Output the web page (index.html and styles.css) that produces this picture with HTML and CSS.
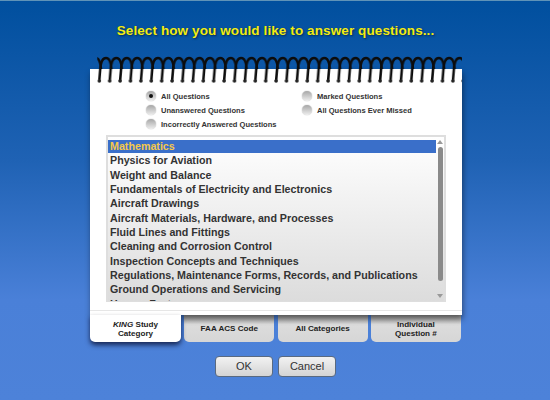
FILE: index.html
```html
<!DOCTYPE html>
<html lang="en">
<head>
    <meta charset="UTF-8">
    <title>Select Questions</title>
    <link rel="stylesheet" href="styles.css">
</head>
<body>
    <h1 class="title">Select how you would like to answer questions...</h1>
    <div class="notebook">
        <svg class="spiral" width="372" height="30" viewBox="0 0 372 30">
            <defs>
                <path id="loop" d="M0 26 L0.9 15 C1.4 7 3.6 3 6.6 3 C9.6 3 11.6 7 12.2 14" fill="none" stroke="#0c0c0c" stroke-width="2.5"/>
                <pattern id="coil" x="7.3" y="0" width="10.4" height="30" patternUnits="userSpaceOnUse">
                    <use href="#loop" x="-8.4"/>
                    <use href="#loop" x="2"/>
                    <circle cx="2" cy="26" r="1.8" fill="#222"/>
                </pattern>
            </defs>
            <rect x="7.3" width="364.7" height="30" fill="url(#coil)"/>
        </svg>
        <div class="card">
            <div class="options">
                <div class="option-col">
                    <label class="option"><span class="radio checked"></span>All Questions</label>
                    <label class="option"><span class="radio"></span>Unanswered Questions</label>
                    <label class="option"><span class="radio"></span>Incorrectly Answered Questions</label>
                </div>
                <div class="option-col">
                    <label class="option"><span class="radio"></span>Marked Questions</label>
                    <label class="option"><span class="radio"></span>All Questions Ever Missed</label>
                </div>
            </div>
            <div class="listbox">
                <ul class="list">
                    <li class="selected">Mathematics</li>
                    <li>Physics for Aviation</li>
                    <li>Weight and Balance</li>
                    <li>Fundamentals of Electricity and Electronics</li>
                    <li>Aircraft Drawings</li>
                    <li>Aircraft Materials, Hardware, and Processes</li>
                    <li>Fluid Lines and Fittings</li>
                    <li>Cleaning and Corrosion Control</li>
                    <li>Inspection Concepts and Techniques</li>
                    <li>Regulations, Maintenance Forms, Records, and Publications</li>
                    <li>Ground Operations and Servicing</li>
                    <li>Human Factors</li>
                </ul>
                <div class="scrollbar">
                    <span class="arrow up"></span>
                    <span class="thumb"></span>
                    <span class="arrow down"></span>
                </div>
            </div>
            <div class="card-rule"></div>
        </div>
        <div class="tabs">
            <div class="tab active"><span><em>KING</em> Study<br>Category</span></div>
            <div class="tab">FAA ACS Code</div>
            <div class="tab">All Categories</div>
            <div class="tab">Individual<br>Question #</div>
        </div>
    </div>
    <div class="buttons">
        <button class="btn">OK</button>
        <button class="btn">Cancel</button>
    </div>
</body>
</html>
```

FILE: styles.css
```css
html, body {
    height: 100%;
}
body {
    margin: 0;
    height: 400px;
    overflow: hidden;
    font-family: "Liberation Sans", Arial, sans-serif;
    background: linear-gradient(to bottom, #004f9e 0%, #1f62b4 40%, #4a80d8 75%, #4d82d9 100%);
    border-top: 1px solid #5f93b8;
    box-sizing: border-box;
}
.title {
    margin: 0;
    padding: 21px 0 0 1px;
    height: 33px;
    line-height: 17px;
    text-align: center;
    font-size: 13.5px;
    font-weight: bold;
    letter-spacing: 0.1px;
    color: #f2ec10;
    text-shadow: 1px 1px 2px rgba(0, 0, 0, 0.5);
}
.notebook {
    width: 372px;
    margin-left: 90px;
}
.spiral {
    display: block;
    position: relative;
    z-index: 2;
    margin-bottom: -16px;
}
.card {
    position: relative;
    z-index: 1;
    height: 246px;
    box-sizing: border-box;
    background: #fff;
    padding: 22px 16px 0;
    box-shadow: 1px 4px 6px rgba(0, 0, 0, 0.45);
}
.card-rule {
    height: 1px;
    margin: 8px -16px 0;
    background: #e6e6e6;
}
.options {
    display: flex;
    padding-left: 40px;
    height: 44px;
}
.option-col {
    flex: none;
    width: 156px;
    display: flex;
    flex-direction: column;
    gap: 4px;
}
.option {
    display: flex;
    align-items: center;
    gap: 5px;
    height: 10px;
    font-size: 7.55px;
    font-weight: bold;
    color: #333;
    white-space: nowrap;
}
.radio {
    width: 10px;
    height: 10px;
    border-radius: 50%;
    flex: none;
    background: linear-gradient(to bottom, #a6a6a6, #eeeeee);
    box-shadow: 0 0 1px #888;
    position: relative;
}
.radio.checked:after {
    content: "";
    position: absolute;
    left: 3px;
    top: 3px;
    width: 4px;
    height: 4px;
    border-radius: 50%;
    background: #111;
}
.listbox {
    width: 340px;
    height: 167px;
    box-sizing: border-box;
    display: flex;
    border: 2px solid #dedede;
    border-bottom-width: 1px;
    background: linear-gradient(to bottom, #fff 0%, #dcdcdc 100%);
    padding-top: 3px;
    overflow: hidden;
}
.list {
    list-style: none;
    margin: 0;
    padding: 0;
    width: 328px;
    flex: none;
}
.list li {
    height: 13px;
    line-height: 13px;
    margin-bottom: 1.35px;
    padding-left: 2px;
    font-size: 10.7px;
    font-weight: bold;
    color: #333;
    white-space: nowrap;
}
.list li.selected {
    background: #3a6fc9;
    color: #f5c84a;
}
.scrollbar {
    flex: 1;
    display: flex;
    flex-direction: column;
    align-items: center;
    height: 158px;
}
.thumb {
    width: 5px;
    height: 134px;
    margin-top: 3px;
    border-radius: 3px;
    background: #8a8a8a;
}
.arrow {
    width: 0;
    height: 0;
    border-left: 3px solid transparent;
    border-right: 3px solid transparent;
}
.arrow.up {
    border-bottom: 4px solid #999;
}
.arrow.down {
    margin-top: auto;
    border-top: 4px solid #999;
}
.tabs {
    display: flex;
    gap: 3.3px;
    width: 372px;
}
.tab {
    width: 90px;
    height: 27px;
    box-sizing: border-box;
    padding-top: 1px;
    display: flex;
    align-items: center;
    justify-content: center;
    text-align: center;
    font-size: 8.1px;
    line-height: 9.5px;
    font-weight: bold;
    color: #222;
    border-radius: 0 0 5px 5px;
    background: linear-gradient(to bottom, #9a9a9a 0%, #dcdcdc 35%, #d6d6d6 100%);
}
.tab.active {
    width: 91px;
    background: #fff;
    position: relative;
    z-index: 3;
    box-shadow: 0 3px 5px rgba(0, 0, 30, 0.7);
}
.buttons {
    display: flex;
    justify-content: flex-start;
    gap: 5px;
    margin: 14px 0 0 215px;
}
.btn {
    width: 58px;
    height: 21px;
    padding: 0 0 1px;
    font-family: "Liberation Sans", Arial, sans-serif;
    font-size: 11px;
    color: #333;
    border: 1px solid #5a6a80;
    border-radius: 4px;
    background: linear-gradient(to bottom, #f2f2f2, #d4d4d4);
}
```
